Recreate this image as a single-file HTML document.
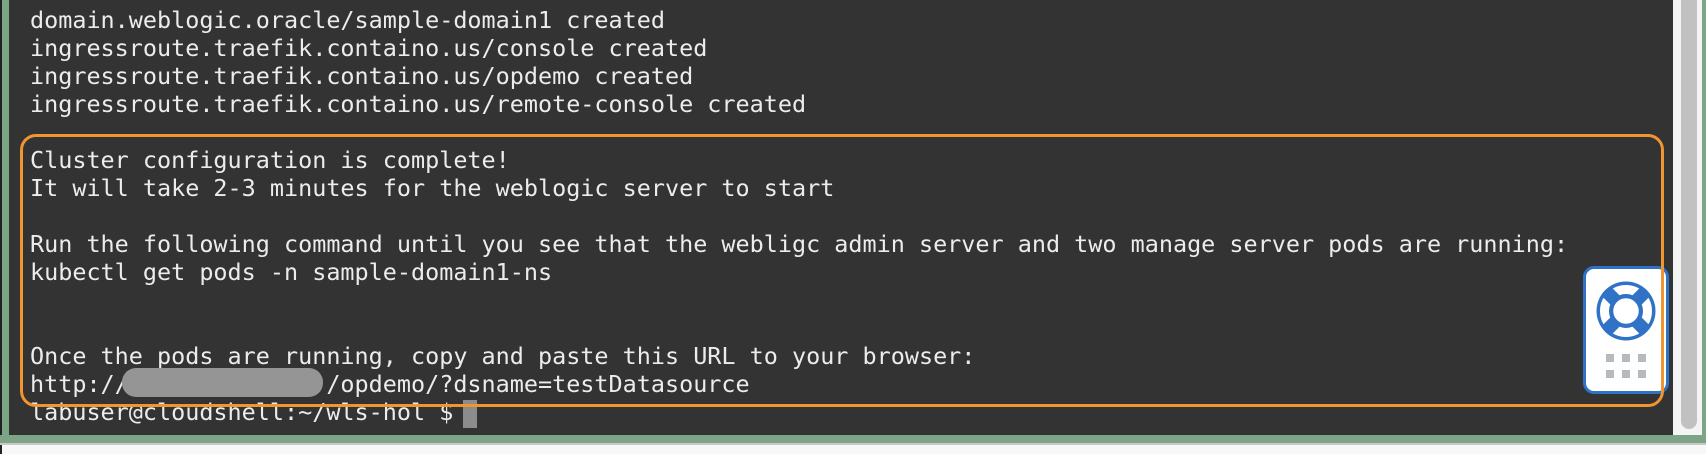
<!DOCTYPE html>
<html><head><meta charset="utf-8"><style>
html,body{margin:0;padding:0;width:1706px;height:454px;overflow:hidden;background:#f7f7f7;position:relative}
.g{position:absolute;background:#7da585}
.term{position:absolute;left:9px;top:0;width:1664px;height:435px;background:#333333}
.txt{position:absolute;left:30px;top:6px;margin:0;font-family:"DejaVu Sans Mono","Liberation Mono",monospace;font-size:23.45px;line-height:28px;color:#ececec;white-space:pre}
.box{position:absolute;left:20px;top:134px;width:1638px;height:267px;border:3px solid #f0952f;border-radius:16px;z-index:3}
.blob{position:absolute;left:122px;top:368px;width:201px;height:29px;border-radius:14px;background:#959595}
.cur{position:absolute;left:463px;top:400px;width:14px;height:28px;background:#8c8c8c}
.w{position:absolute;left:1583px;top:266px;width:80px;height:122px;border:3px solid #2f72c6;border-radius:11px;background:#fff;z-index:2}
.d{position:absolute;width:8px;height:8px;background:#b6b9c0}
</style></head><body>
<div class="g" style="left:0;top:0;width:9px;height:443px"></div>
<div style="position:absolute;left:0;top:0;width:2px;height:454px;background:#222"></div>
<div class="term"></div>
<div style="position:absolute;left:1673px;top:0;width:29px;height:435px;background:#f4f4f4"></div>
<div style="position:absolute;left:1681px;top:0;width:16px;height:429px;border-radius:0 0 8px 8px;background:#c1c1c1"></div>
<div class="g" style="left:1702px;top:0;width:4px;height:443px"></div>
<div class="g" style="left:0;top:435px;width:1706px;height:8px"></div>
<div style="position:absolute;left:0;top:443px;width:1706px;height:2px;background:#c8c8cc"></div>
<pre class="txt">domain.weblogic.oracle/sample-domain1 created
ingressroute.traefik.containo.us/console created
ingressroute.traefik.containo.us/opdemo created
ingressroute.traefik.containo.us/remote-console created

Cluster configuration is complete!
It will take 2-3 minutes for the weblogic server to start

Run the following command until you see that the webligc admin server and two manage server pods are running:
kubectl get pods -n sample-domain1-ns


Once the pods are running, copy and paste this URL to your browser:
http://              /opdemo/?dsname=testDatasource
labuser@cloudshell:~/wls-hol $ </pre>
<div class="blob"></div>
<div class="cur"></div>
<div class="box"></div>
<div class="w">
<svg style="position:absolute;left:10px;top:12px" width="60" height="60" viewBox="0 0 60 60">
<circle cx="30" cy="30" r="29.5" fill="#2f72c6"/>
<circle cx="30" cy="30" r="21.5" fill="none" stroke="#fff" stroke-width="9"/>
<g stroke="#2f72c6" stroke-width="13">
<line x1="19" y1="19" x2="10" y2="10"/><line x1="41" y1="19" x2="50" y2="10"/>
<line x1="19" y1="41" x2="10" y2="50"/><line x1="41" y1="41" x2="50" y2="50"/>
</g>
<circle cx="30" cy="30" r="14" fill="#fff" stroke="#2f72c6" stroke-width="2.5"/>
</svg>
<div class="d" style="left:20px;top:85px"></div><div class="d" style="left:36px;top:85px"></div><div class="d" style="left:52px;top:85px"></div>
<div class="d" style="left:20px;top:101px"></div><div class="d" style="left:36px;top:101px"></div><div class="d" style="left:52px;top:101px"></div>
</div>
</body></html>
